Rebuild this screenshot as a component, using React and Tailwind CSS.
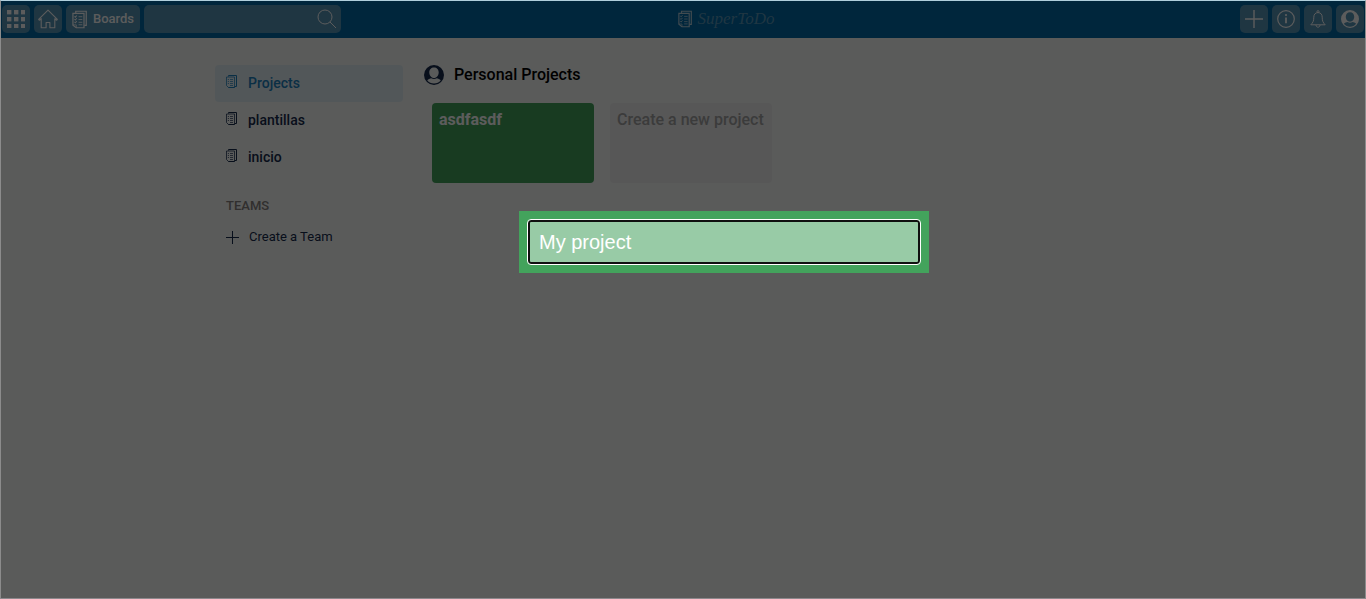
import React from "react";

function BoardIcon({ className }) {
  return (
    <svg viewBox="0 0 16 20" className={className} fill="none" stroke="currentColor" strokeWidth="1.3" aria-hidden="true">
      <path d="M4 3V1.200H15.200v15h-2" />
      <path d="M1 3.500h11.800v15.300H4.500L1 16z" />
      <path d="M1 15.700h3.600v3" strokeWidth="0.8" />
      <path d="M2.600 6.600l1 .9 1.500-1.800M2.600 9.600l1 .9 1.500-1.800M2.600 12.600l1 .9 1.500-1.800" strokeWidth="1.100" />
      <path d="M7 7h4M7 10h4M7 13h4M7 15.600h4" strokeWidth="0.9" />
    </svg>
  );
}

function SmallBoardIcon() {
  return (
    <svg viewBox="0 0 11 13" className="h-[13px] w-[11px]" fill="none" stroke="currentColor" aria-hidden="true">
      <path d="M2.500 1.500V.5h8v11h-2" />
      <path d="M.5 2v8.500l2 2h6V2z" strokeWidth="1" opacity="0.75" />
      <path d="M1.800 4.500h1.200M1.800 6.500h1.200M1.800 8.500h1.200M4 4.500h3M4 6.500h3M4 8.500h3M4 10.500h3" strokeWidth="0.9" opacity="0.75" />
      <path d="M2.500 12.500h6" strokeWidth="1" />
    </svg>
  );
}

function GridIcon() {
  const cells = [0, 7, 14];
  return (
    <svg viewBox="0 0 18 18" className="size-[18px]" fill="currentColor" aria-hidden="true">
      {cells.map((y) => cells.map((x) => <rect key={x + "-" + y} x={x} y={y} width="4.4" height="4.4" />))}
    </svg>
  );
}

function HomeIcon() {
  return (
    <svg viewBox="0 0 20 20" className="size-5" fill="none" stroke="currentColor" strokeWidth="1.1" strokeLinejoin="round" aria-hidden="true">
      <path d="M10 1.2L.9 10.1c-.4.5.3 1.3.9.9l1.4-1.3v9h4.9v-5.2h3.8v5.2h4.9v-9l1.4 1.3c.6.4 1.3-.4.9-.9z" />
    </svg>
  );
}

function SearchIcon() {
  return (
    <svg viewBox="0 0 20 20" className="size-5" fill="none" stroke="currentColor" strokeWidth="1" aria-hidden="true">
      <circle cx="8" cy="8" r="7" />
      <path d="M13 13l6 6" />
    </svg>
  );
}

function PlusIcon({ className }) {
  return (
    <svg viewBox="0 0 18 18" className={className} stroke="currentColor" strokeWidth="1.4" aria-hidden="true">
      <path d="M9 0v18M0 9h18" />
    </svg>
  );
}

function InfoIcon() {
  return (
    <svg viewBox="0 0 18 18" className="size-[18px]" fill="none" stroke="currentColor" strokeWidth="1.2" aria-hidden="true">
      <circle cx="9" cy="9" r="8.3" />
      <path d="M9 7.5v5.8" strokeWidth="1.8" />
      <circle cx="9" cy="5.1" r="1.1" fill="currentColor" stroke="none" />
    </svg>
  );
}

function BellIcon() {
  return (
    <svg viewBox="0 0 16 18" className="h-[18px] w-4" fill="none" stroke="currentColor" strokeWidth="1" strokeLinejoin="round" aria-hidden="true">
      <circle cx="8" cy="1.6" r="1" />
      <path d="M8 2.6c-2.8 0-4.2 2-4.2 4.6 0 4-.9 5.400-3 7.600h14.400c-2.100-2.200-3-3.600-3-7.600 0-2.600-1.400-4.600-4.200-4.600z" />
      <path d="M6 15c0 2.900 4 2.900 4 0" />
    </svg>
  );
}

function UserIcon({ className }) {
  return (
    <svg viewBox="0 0 20 20" className={className} aria-hidden="true">
      <path
        fill="currentColor"
        fillRule="evenodd"
        d="M10 0a10 10 0 1 0 0 20 10 10 0 0 0 0-20zM10 2.600c2.800 0 4.700 2.100 4.700 4.900S12.800 13 10 13 5.300 10.300 5.300 7.500 7.200 2.600 10 2.600zM3.200 15.300c1.200-1.200 2.700-1.800 4-2 .8.500 1.800.8 2.800.8s2-.3 2.800-.8c1.300.2 2.800.8 4 2C15.200 17.400 12.700 18.500 10 18.500S4.800 17.400 3.200 15.300z"
      />
    </svg>
  );
}

const topButton = "flex h-7 items-center justify-center rounded-[5px] bg-[#5696b8] text-white";

function Header() {
  return (
    <header className="grid h-[38px] grid-cols-[1fr_auto_1fr] items-center bg-[#016aa7] px-[2px]">
      <div className="flex gap-1">
        <button aria-label="Apps" className={topButton + " w-7"}><GridIcon /></button>
        <button aria-label="Home" className={topButton + " w-7"}><HomeIcon /></button>
        <button className={topButton + " w-[74px] gap-1.5 text-[13px] font-medium"}>
          <BoardIcon className="h-[19px] w-[15px]" />
          Boards
        </button>
        <div className="flex h-7 w-[197px] items-center rounded-[5px] bg-[#5696b8] pr-1 text-white">
          <input type="search" aria-label="Search" className="h-full min-w-0 flex-1 bg-transparent px-2 outline-none" />
          <SearchIcon />
        </div>
      </div>
      <a href="#home" className="flex items-center gap-1.5 pl-[86px] text-[#5696b8]">
        <BoardIcon className="h-[18px] w-[14px] text-[#b5cfdd]" />
        <span className="font-['Liberation_Serif',cursive] text-[17px] leading-5 italic">SuperToDo</span>
      </a>
      <div className="flex justify-end gap-1">
        <button aria-label="Create" className={topButton + " w-7"}><PlusIcon className="size-[18px]" /></button>
        <button aria-label="Information" className={topButton + " w-7"}><InfoIcon /></button>
        <button aria-label="Notifications" className={topButton + " w-7"}><BellIcon /></button>
        <button aria-label="Account" className={topButton + " w-7"}><UserIcon className="size-[18px]" /></button>
      </div>
    </header>
  );
}

function NavItem({ label, active }) {
  return (
    <a
      href={"#" + label}
      className={
        "flex h-[37px] items-start gap-[11px] rounded px-[11px] pt-2 text-sm font-medium " +
        (active ? "bg-[#e4f0f6] text-[#1d82c0]" : "text-[#172b4d]")
      }
    >
      <span className="pt-0.5"><SmallBoardIcon /></span>
      {label}
    </a>
  );
}

function Sidebar() {
  return (
    <nav className="w-[188px] shrink-0">
      <NavItem label="Projects" active />
      <NavItem label="plantillas" />
      <NavItem label="inicio" />
      <h2 className="mt-5 px-[11px] text-[13px] leading-5 font-medium text-[#87827f]">TEAMS</h2>
      <button className="mt-[7px] flex h-7 items-center gap-[10px] px-[11px] text-[13px] text-[#172b4d]">
        <PlusIcon className="size-[13px]" />
        Create a Team
      </button>
    </nav>
  );
}

export default function App() {
  return (
    <div className="min-h-screen bg-[#f8fcfa] font-[Roboto,sans-serif]">
      <Header />
      <main className="mx-auto flex w-full max-w-[936px] gap-[21px] pt-[27px]">
        <Sidebar />
        <section className="flex-1">
          <h1 className="flex h-5 items-center gap-[10px] text-base font-medium text-black">
            <UserIcon className="size-5 text-[#172b4d]" />
            Personal Projects
          </h1>
          <div className="mt-[18px] flex gap-4 pl-2">
            <a href="#asdfasdf" className="h-20 w-[162px] rounded bg-[#43a35c] px-[7px] py-[5px] text-base font-bold text-white">
              asdfasdf
            </a>
            <button className="flex h-20 w-[162px] items-start rounded bg-[#f1f1f1] px-[7px] py-[5px] text-base font-medium whitespace-nowrap text-[#a5a5a5]">
              Create a new project
            </button>
          </div>
        </section>
      </main>
      <div className="fixed inset-0 flex items-start justify-center border border-t-[#b0cfdc] border-r-[#8c8c8c] border-b-[#8c888c] border-l-[#8c8c8c] bg-black/64 pt-[210px] pl-[82px]">
        <form role="dialog" aria-label="New project" className="w-[410px] bg-[#43a35c] p-[9px]" onSubmit={(e) => e.preventDefault()}>
          <input
            type="text"
            aria-label="Project name"
            defaultValue="My project"
            className="block h-11 w-full rounded-[3px] border-2 border-[#101010] bg-[#98cba6] px-[9px] font-['Liberation_Sans',sans-serif] text-xl text-white outline-1 outline-white"
          />
        </form>
      </div>
    </div>
  );
}
